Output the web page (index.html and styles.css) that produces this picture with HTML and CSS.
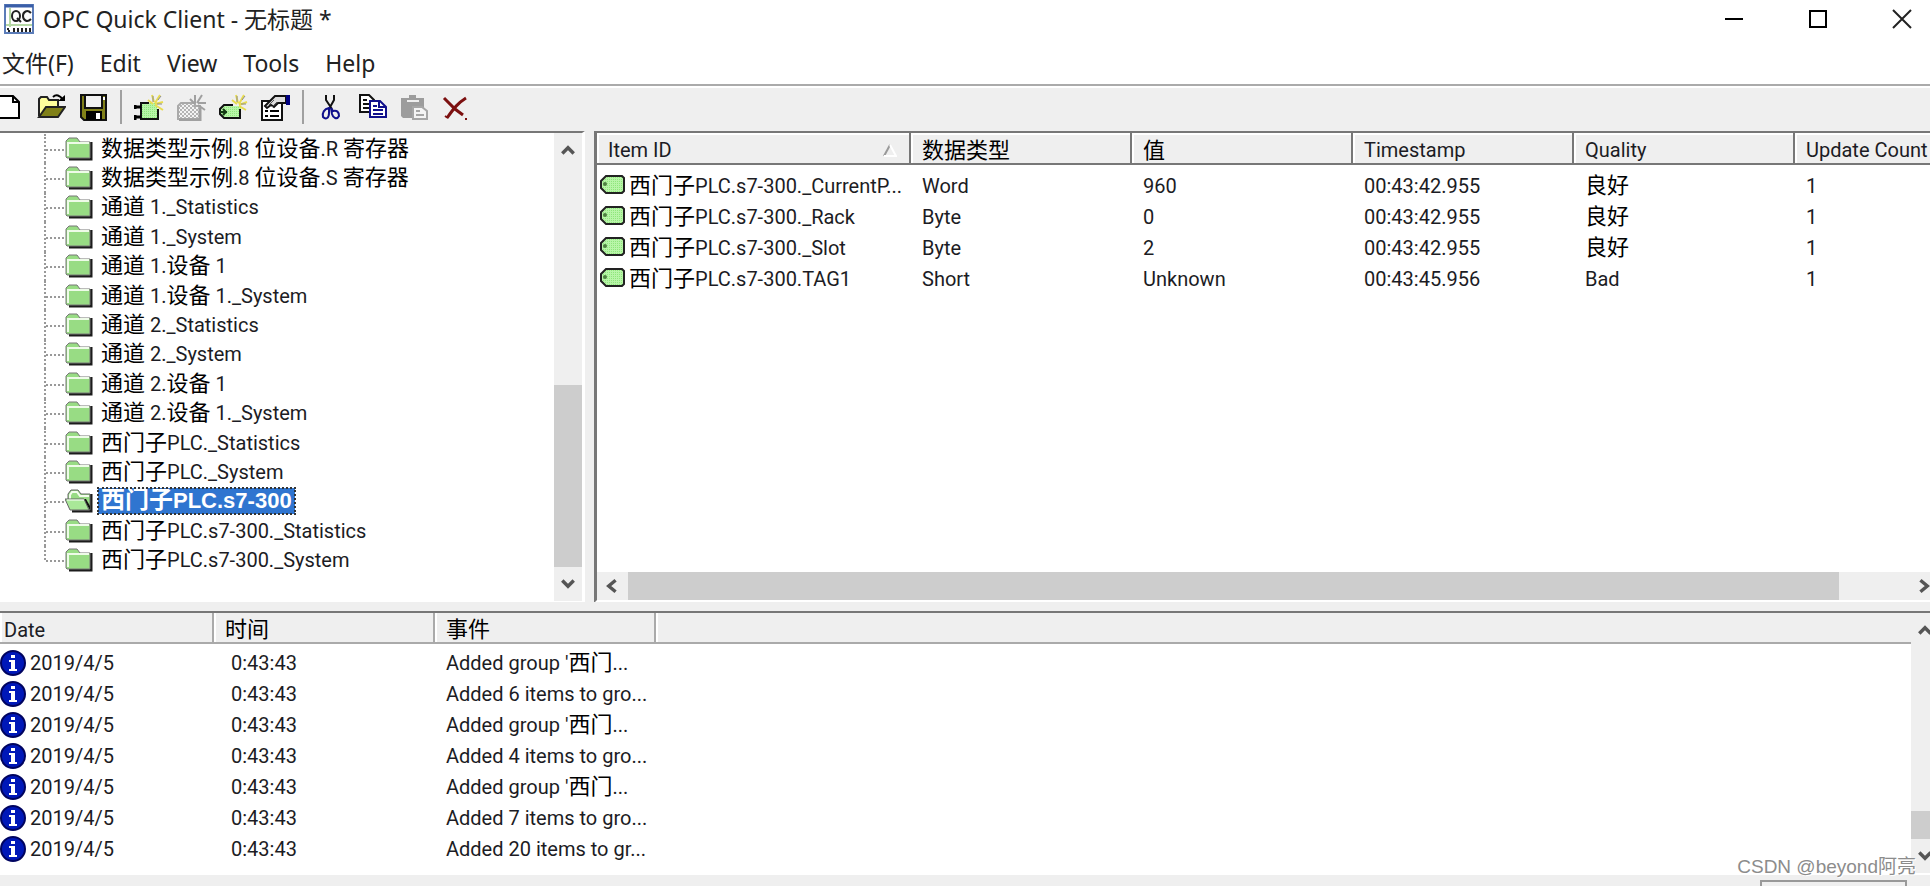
FILE: index.html
```html
<!DOCTYPE html>
<html lang="zh-CN">
<head>
<meta charset="utf-8">
<title>OPC Quick Client - 无标题 *</title>
<link rel="stylesheet" href="styles.css">
</head>
<body>
<svg class="defs" aria-hidden="true">
  <defs>
    <pattern id="mesh" width="2" height="2" patternUnits="userSpaceOnUse"><rect width="2" height="2" fill="#b8f5a8"/><rect width="1" height="1" fill="#8fe67c"/></pattern>
    <pattern id="graymesh" width="4" height="4" patternUnits="userSpaceOnUse"><rect width="4" height="4" fill="#f4f4f4"/><rect width="2" height="2" fill="#b4b4b4"/><rect x="2" y="2" width="2" height="2" fill="#b4b4b4"/></pattern>
  </defs>
  <symbol id="folder" viewBox="0 0 28 24">
    <path d="M4 22H26V5" fill="none" stroke="#1c1c1c" stroke-width="3"/>
    <path d="M1 20V4l3-3h8l3 4h10v16H2z" fill="#98dc84" stroke="#767676"/>
    <path d="M3 19V6h21" fill="none" stroke="#eefbe8" stroke-width="2"/>
  </symbol>
  <symbol id="folder-open" viewBox="0 0 28 24">
    <path d="M7 22H26V5" fill="none" stroke="#1c1c1c" stroke-width="3"/>
    <path d="M3 12V5l3-4h7l3 4h9v16H7z" fill="#98dc84" stroke="#666"/>
    <path d="M5 10V6l2-3h5l3 4h9" fill="none" stroke="#f2fcec" stroke-width="2"/>
    <path d="M18 10l7 11V17l-4-7z" fill="#111"/>
    <path d="M0 10h19l5 11H5z" fill="#a9e898" stroke="#666"/>
    <path d="M2 11h17" stroke="#fff"/>
  </symbol>
  <symbol id="tag" viewBox="0 0 27 20">
    <path d="M7 1h16l2 2v13l-2 2H7l-5-5V6z" fill="url(#mesh)" stroke="#222" stroke-width="2"/>
    <circle cx="6" cy="9" r="2" fill="#4d8040"/>
  </symbol>
  <symbol id="info" viewBox="0 0 26 26">
    <circle cx="13" cy="13" r="12" fill="#0018b8" stroke="#000460" stroke-width="2"/>
    <path d="M11 5h4v3h-4zM9 10h6v9h2v2H9v-2h2v-7H9z" fill="#fff"/>
  </symbol>
  <symbol id="up" viewBox="0 0 14 12"><path d="M2 9l5-5 5 5" fill="none" stroke="#555" stroke-width="3"/></symbol>
  <symbol id="down" viewBox="0 0 14 12"><path d="M2 3l5 5 5-5" fill="none" stroke="#555" stroke-width="3"/></symbol>
  <symbol id="left" viewBox="0 0 12 14"><path d="M10 2L4 7l6 5" fill="none" stroke="#555" stroke-width="3"/></symbol>
  <symbol id="right" viewBox="0 0 12 14"><path d="M2 2l6 5-6 5" fill="none" stroke="#555" stroke-width="3"/></symbol>
</svg>

<header class="titlebar">
  <svg class="logo" viewBox="0 0 30 30">
    <rect x="1" y="1" width="28" height="28" fill="#fff" stroke="#5b7cb8" stroke-width="2"/>
    <path d="M1 2h28" stroke="#3a5ea8" stroke-width="3"/>
    <path d="M6 4v19M2 21h26" stroke="#b5d8a4" stroke-width="2"/>
    <ellipse cx="12" cy="12" rx="4" ry="5" fill="none" stroke="#222" stroke-width="2"/>
    <path d="M13 14l4 4M27 9c-4-4-8-1-8 3s4 7 8 3" fill="none" stroke="#222" stroke-width="2"/>
    <path d="M4 24v2m1 0v2M10 24v4M14 24v4M18 24v4M22 24v4M26 24v4" stroke="#222" stroke-width="2"/>
  </svg>
  <h1 class="caption">OPC Quick Client - 无标题 *</h1>
  <div class="winbtns">
    <button type="button" aria-label="Minimize"><svg viewBox="0 0 20 20"><path d="M1 10h18" stroke="#000" stroke-width="2"/></svg></button>
    <button type="button" aria-label="Maximize"><svg viewBox="0 0 20 20"><path d="M2 2h16v16H2z" fill="none" stroke="#000" stroke-width="2"/></svg></button>
    <button type="button" aria-label="Close"><svg viewBox="0 0 20 20"><path d="M1 1l18 18M19 1L1 19" stroke="#222" stroke-width="2"/></svg></button>
  </div>
</header>

<nav class="menubar">
  <button type="button">文件(F)</button>
  <button type="button">Edit</button>
  <button type="button">View</button>
  <button type="button">Tools</button>
  <button type="button">Help</button>
</nav>

<div class="toolbar" role="toolbar">
  <button type="button" class="first" aria-label="New"><svg viewBox="0 0 30 28"><path d="M-3 3h16l6 6v16H-3z" fill="#fff" stroke="#000" stroke-width="2"/><path d="M13 3v6h6" fill="none" stroke="#000" stroke-width="2"/></svg></button>
  <button type="button" aria-label="Open"><svg viewBox="0 0 30 28"><path d="M3 23V6l2-2h6l2 3h9v6" fill="#ffff9c" stroke="#222" stroke-width="2"/><path d="M3 24l7-10h19l-7 10z" fill="#808018" stroke="#222" stroke-width="2"/><path d="M17 4c3-3 7-2 10 3" fill="none" stroke="#000" stroke-width="2"/><path d="M22 8h7V2z"/></svg></button>
  <button type="button" aria-label="Save"><svg viewBox="0 0 30 28"><path d="M3 2h25v25H6l-3-3z" fill="#808018" stroke="#111" stroke-width="2"/><path d="M7 2h17v13H7z" fill="#f2f2f2" stroke="#111" stroke-width="2"/><path d="M8 18h16v9H8z" fill="#000"/><path d="M18 20h4v6h-4z" fill="#fff"/><path d="M25 4h2v3h-2z" fill="#fff"/></svg></button>
  <span class="sep"></span>
  <button type="button" aria-label="New server"><svg viewBox="0 0 30 28"><path d="M7 10h16v16H7z" fill="url(#mesh)"/><path d="M7 10h8M7 9v18M6 26h18V16" fill="none" stroke="#111" stroke-width="2"/><path d="M1 12v4M1 14h6M1 22v5M1 24h6" stroke="#000" stroke-width="3"/><path d="M18 2l2 7M26 2l-5 8M29 9l-8 2M29 17l-8-5M14 7l5 4" stroke="#e8dc50" stroke-width="2"/><path d="M19 3v6M27 3l-3 4M23 11h5" stroke="#8c8c8c"/></svg></button>
  <button type="button" aria-label="New group" disabled><svg viewBox="0 0 30 28"><path d="M2 26V13l3-3h14v3h5v13z" fill="url(#graymesh)" stroke="#aaa" stroke-width="2"/><path d="M3 27h21V15" fill="none" stroke="#a0a0a0" stroke-width="3"/><path d="M19 2v8M26 2l-5 8M30 10h-8M29 17l-7-5M14 6l5 5" stroke="#a0a0a0" stroke-width="2"/></svg></button>
  <button type="button" aria-label="New item"><svg viewBox="0 0 30 28"><path d="M5 13h18v11H5l-3-3v-5z" fill="url(#mesh)"/><path d="M15 12H6l-4 4v5l4 4h16v-9" fill="none" stroke="#111" stroke-width="2"/><path d="M2 19h7M5 16l3 3-3 3" fill="none" stroke="#133a13" stroke-width="2"/><path d="M18 2l2 8M26 2l-5 9M29 9l-8 3M28 17l-7-4M14 7l5 4" stroke="#e8dc50" stroke-width="2"/><path d="M19 3v6M27 3l-3 4M23 11h5" stroke="#8c8c8c"/></svg></button>
  <button type="button" aria-label="Properties"><svg viewBox="0 0 30 28"><path d="M2 8h20v19H2z" fill="#fff" stroke="#111" stroke-width="2"/><path d="M5 13l7-7 3-3h11v7h-8l-4 4-3-2-4 3z" fill="#ddd" stroke="#111" stroke-width="2"/><path d="M9 12l5-5m-2 7l5-5" stroke="#555"/><path d="M26 2h4v10h-4z" fill="#000080"/><path d="M5 18h3m2 0h9M5 23h3m2 0h9" stroke="#000" stroke-width="2"/></svg></button>
  <span class="sep"></span>
  <button type="button" aria-label="Cut"><svg viewBox="0 0 30 28"><path d="M10 2v5l6 9M18 2v5l-5 9" fill="none" stroke="#111" stroke-width="2"/><path d="M13 15c-5 1-7 5-6 9 3 3 6 1 6-4zM15 15l2 3c4-1 6 1 6 5-2 4-6 2-7-2z" fill="none" stroke="#10108c" stroke-width="2"/></svg></button>
  <button type="button" aria-label="Copy"><svg viewBox="0 0 30 28"><path d="M2 2h9l5 5v12H2z" fill="#fff" stroke="#111" stroke-width="2"/><path d="M5 7h4m-4 4h6m-6 4h6" stroke="#111" stroke-width="2"/><path d="M12 8h10l6 6v10H12z" fill="#fff" stroke="#10108c" stroke-width="2"/><path d="M21 8v6h6M15 13h4m-4 4h10m-10 4h10" fill="none" stroke="#10108c" stroke-width="2"/></svg></button>
  <button type="button" aria-label="Paste" disabled><svg viewBox="0 0 30 28"><path d="M1 5h8V2h7v3h8v20H3l-2-2z" fill="#9c9c9c"/><path d="M7 8h12" stroke="#eee" stroke-width="2"/><path d="M13 14h9l5 4v8H13z" fill="#f4f4f4" stroke="#a6a6a6" stroke-width="2"/><path d="M16 18h4m-4 4h8" stroke="#a6a6a6" stroke-width="2"/></svg></button>
  <button type="button" aria-label="Delete"><svg viewBox="0 0 30 28"><path d="M2 5l11 11 8 6M24 5c-8 5-12 10-19 20" fill="none" stroke="#7c1010" stroke-width="3"/><path d="M3 23l3 2M23 26h2" stroke="#7c1010" stroke-width="2"/></svg></button>
</div>

<main class="upper">
  <section class="tree-pane" aria-label="Groups">
    <ul class="tree">
      <li><svg><use href="#folder"/></svg><span class="label"><i>数据类型示例</i>.8 <i>位设备</i>.R <i>寄存器</i></span></li>
      <li><svg><use href="#folder"/></svg><span class="label"><i>数据类型示例</i>.8 <i>位设备</i>.S <i>寄存器</i></span></li>
      <li><svg><use href="#folder"/></svg><span class="label"><i>通道</i> 1._Statistics</span></li>
      <li><svg><use href="#folder"/></svg><span class="label"><i>通道</i> 1._System</span></li>
      <li><svg><use href="#folder"/></svg><span class="label"><i>通道</i> 1.<i>设备</i> 1</span></li>
      <li><svg><use href="#folder"/></svg><span class="label"><i>通道</i> 1.<i>设备</i> 1._System</span></li>
      <li><svg><use href="#folder"/></svg><span class="label"><i>通道</i> 2._Statistics</span></li>
      <li><svg><use href="#folder"/></svg><span class="label"><i>通道</i> 2._System</span></li>
      <li><svg><use href="#folder"/></svg><span class="label"><i>通道</i> 2.<i>设备</i> 1</span></li>
      <li><svg><use href="#folder"/></svg><span class="label"><i>通道</i> 2.<i>设备</i> 1._System</span></li>
      <li><svg><use href="#folder"/></svg><span class="label"><i>西门子</i>PLC._Statistics</span></li>
      <li><svg><use href="#folder"/></svg><span class="label"><i>西门子</i>PLC._System</span></li>
      <li><svg><use href="#folder-open"/></svg><span class="label selected"><i>西门子</i>PLC.s7-300</span></li>
      <li><svg><use href="#folder"/></svg><span class="label"><i>西门子</i>PLC.s7-300._Statistics</span></li>
      <li><svg><use href="#folder"/></svg><span class="label"><i>西门子</i>PLC.s7-300._System</span></li>
    </ul>
    <div class="vscroll">
      <button type="button" aria-label="Scroll up"><svg class="v"><use href="#up"/></svg></button>
      <div class="track tree-track"><div class="thumb"></div></div>
      <button type="button" aria-label="Scroll down"><svg class="v"><use href="#down"/></svg></button>
    </div>
  </section>

  <section class="items-pane" aria-label="Items">
    <div class="items-view">
      <table class="grid items">
        <colgroup><col class="c-item"><col class="c-std"><col class="c-std"><col class="c-std"><col class="c-std"><col></colgroup>
        <thead><tr>
          <th><div class="sorted">Item ID<svg class="sort" viewBox="0 0 14 13"><path d="M1 12L7 1" stroke="#999" stroke-width="2"/><path d="M7 1l6 11H1" fill="none" stroke="#fff" stroke-width="2"/></svg></div></th>
          <th><i>数据类型</i></th><th><i>值</i></th><th>Timestamp</th><th>Quality</th><th>Update Count</th>
        </tr></thead>
        <tbody>
          <tr><td><svg class="tagico"><use href="#tag"/></svg><i>西门子</i>PLC.s7-300._CurrentP...</td><td>Word</td><td>960</td><td>00:43:42.955</td><td><i>良好</i></td><td>1</td></tr>
          <tr><td><svg class="tagico"><use href="#tag"/></svg><i>西门子</i>PLC.s7-300._Rack</td><td>Byte</td><td>0</td><td>00:43:42.955</td><td><i>良好</i></td><td>1</td></tr>
          <tr><td><svg class="tagico"><use href="#tag"/></svg><i>西门子</i>PLC.s7-300._Slot</td><td>Byte</td><td>2</td><td>00:43:42.955</td><td><i>良好</i></td><td>1</td></tr>
          <tr><td><svg class="tagico"><use href="#tag"/></svg><i>西门子</i>PLC.s7-300.TAG1</td><td>Short</td><td>Unknown</td><td>00:43:45.956</td><td>Bad</td><td>1</td></tr>
        </tbody>
      </table>
    </div>
    <div class="hscroll">
      <button type="button" aria-label="Scroll left"><svg class="h"><use href="#left"/></svg></button>
      <div class="track"><div class="thumb"></div></div>
      <button type="button" class="end" aria-label="Scroll right"><svg class="h"><use href="#right"/></svg></button>
    </div>
  </section>
</main>

<section class="log-pane" aria-label="Events">
  <div class="log-view">
    <table class="grid log">
      <colgroup><col class="c-date"><col class="c-std"><col class="c-std"><col></colgroup>
      <thead><tr><th>Date</th><th><i>时间</i></th><th><i>事件</i></th><th></th></tr></thead>
      <tbody>
        <tr><td><svg class="infoico"><use href="#info"/></svg>2019/4/5</td><td>0:43:43</td><td>Added group '<i>西门</i>...</td><td></td></tr>
        <tr><td><svg class="infoico"><use href="#info"/></svg>2019/4/5</td><td>0:43:43</td><td>Added 6 items to gro...</td><td></td></tr>
        <tr><td><svg class="infoico"><use href="#info"/></svg>2019/4/5</td><td>0:43:43</td><td>Added group '<i>西门</i>...</td><td></td></tr>
        <tr><td><svg class="infoico"><use href="#info"/></svg>2019/4/5</td><td>0:43:43</td><td>Added 4 items to gro...</td><td></td></tr>
        <tr><td><svg class="infoico"><use href="#info"/></svg>2019/4/5</td><td>0:43:43</td><td>Added group '<i>西门</i>...</td><td></td></tr>
        <tr><td><svg class="infoico"><use href="#info"/></svg>2019/4/5</td><td>0:43:43</td><td>Added 7 items to gro...</td><td></td></tr>
        <tr><td><svg class="infoico"><use href="#info"/></svg>2019/4/5</td><td>0:43:43</td><td>Added 20 items to gr...</td><td></td></tr>
      </tbody>
    </table>
  </div>
  <div class="vscroll log-scroll">
    <button type="button" aria-label="Scroll up"><svg class="v"><use href="#up"/></svg></button>
    <div class="track log-track"><div class="thumb"></div></div>
    <button type="button" aria-label="Scroll down"><svg class="v"><use href="#down"/></svg></button>
  </div>
</section>

<footer class="statusbar"><span class="count"></span></footer>
<div class="watermark">CSDN @beyond阿亮</div>
</body>
</html>
```
FILE: styles.css
```css
* { box-sizing: border-box; }

body {
  margin: 0;
  height: 100vh;
  display: flex;
  flex-direction: column;
  overflow: hidden;
  background: #fff;
  color: #1c1c24;
  font: 20px/24px Roboto, "Noto Sans CJK SC", sans-serif;
}

button {
  margin: 0;
  padding: 0;
  border: 0;
  background: none;
  color: inherit;
  font: inherit;
}

svg { display: block; flex: none; }
.defs { position: absolute; width: 0; height: 0; }

/* Chinese runs are set one step larger than the Latin text */
i {
  font-style: normal;
  font-size: 22px;
  line-height: 20px;
  font-family: "Noto Sans CJK SC", sans-serif;
  color: #000;
}

/* title bar and menus */
.titlebar { flex: none; display: flex; align-items: center; height: 38px; padding-left: 4px; }
.logo { width: 30px; height: 30px; }
.caption {
  flex: 1;
  margin: 0 0 0 9px;
  font: 23px/30px "Noto Sans", "Noto Sans CJK SC", sans-serif;
  color: #222;
}
.winbtns { display: flex; gap: 42px; margin-right: 18px; }
.winbtns button { width: 42px; display: flex; justify-content: flex-end; }
.winbtns svg { width: 20px; height: 20px; }

.menubar {
  flex: none;
  display: flex;
  gap: 26px;
  height: 46px;
  padding: 4px 0 0 2px;
  align-items: center;
  font: 23px/30px "Noto Sans", "Noto Sans CJK SC", sans-serif;
  color: #222;
}

/* toolbar */
.toolbar {
  flex: none;
  display: flex;
  align-items: center;
  height: 47px;
  padding-bottom: 4px;
  background: #efefef;
  border-top: 2px solid #aaa;
  box-shadow: inset 0 2px #fff;
}
.toolbar button { width: 42px; display: flex; justify-content: center; }
.toolbar button.first { width: 30px; }
.toolbar svg { width: 30px; height: 28px; }
.sep { width: 2px; height: 34px; margin: 0 6px; background: #a0a0a0; }

/* upper panes */
.upper { flex: 1; min-height: 0; display: flex; gap: 9px; margin-bottom: 8px; background: #efefef; }
.tree-pane {
  width: 585px;
  display: flex;
  border-top: 2px solid #777;
  border-right: 3px solid #fff;
  border-bottom: 2px solid #fff;
  background: #fff;
}
.tree {
  flex: 1;
  display: grid;
  grid-auto-rows: 1fr;
  margin: 0;
  padding: 1px 0 26px 44px;
  list-style: none;
}
.tree li {
  position: relative;
  min-height: 0;
  display: flex;
  align-items: center;
  padding-left: 21px;
  white-space: nowrap;
}
.tree li::before {
  content: "";
  position: absolute;
  inset: 0 auto 0 0;
  border-left: 2px dotted #999;
}
.tree li:last-child::before { bottom: 50%; }
.tree li::after {
  content: "";
  position: absolute;
  left: 2px;
  top: 50%;
  width: 18px;
  border-top: 2px dotted #999;
}
.tree svg { width: 28px; height: 24px; }
.label { margin-left: 5px; padding: 0 3px; line-height: 26px; }
.selected {
  background: #2f75d0;
  color: #fff;
  font: 700 22px/26px "Liberation Sans", "Noto Sans CJK SC", sans-serif;
  outline: 2px dotted #333;
  outline-offset: -1px;
}
.selected i { color: #fff; font-size: 24px; }

/* scroll bars */
.vscroll { width: 28px; display: flex; flex-direction: column; background: #efefef; }
.vscroll button { height: 34px; display: flex; align-items: center; justify-content: center; }
.hscroll { flex: none; height: 28px; display: flex; background: #efefef; }
.hscroll button { width: 31px; padding-right: 4px; display: flex; align-items: center; justify-content: center; }
.hscroll .end { width: 12px; padding: 0; justify-content: flex-start; }
.track { flex: 1; display: flex; }
.thumb { flex: 1; background: #cdcdcd; }
.vscroll .track { flex-direction: column; }
.tree-track { padding-top: 218px; }
.hscroll .track { padding-right: 79px; }
.v { width: 16px; height: 14px; }
.h { width: 14px; height: 16px; }

/* list views */
.items-pane {
  flex: 1;
  min-width: 0;
  display: flex;
  flex-direction: column;
  border-top: 2px solid #777;
  border-left: 3px solid #777;
  border-bottom: 3px solid #fff;
  background: #fff;
}
.items-view, .log-view { flex: 1; min-width: 0; min-height: 0; }
.grid { width: 100%; table-layout: fixed; border-collapse: separate; border-spacing: 0; }
.grid th, .grid td { padding: 0 0 0 11px; text-align: left; white-space: nowrap; font-weight: 400; }
.grid th { height: 32px; padding-top: 4px; background: #efefef; }
.grid td { height: 31px; }
.c-item { width: 314px; }
.c-std { width: 221px; }
.c-date { width: 214px; }
.items th { border-right: 2px solid #777; border-bottom: 2px solid #777; box-shadow: inset 2px 2px #fff; }
.items th:last-child { border-right: 0; }
.items tbody::before { content: ""; display: block; height: 5px; }
.items td:first-child { padding-left: 2px; }
.sorted { display: flex; align-items: center; justify-content: space-between; padding-right: 12px; }
.sort { width: 14px; height: 13px; }
.tagico { display: inline-block; width: 27px; height: 20px; margin-right: 3px; vertical-align: -2px; }

/* event log */
.log-pane {
  flex: none;
  height: 264px;
  display: flex;
  border-top: 2px solid #777;
  border-bottom: 2px solid #fff;
  background: #fff;
  box-shadow: 0 -9px #efefef;
}
.log th { height: 31px; border-right: 2px solid #aaa; border-bottom: 2px solid #aaa; box-shadow: inset 2px 0 #fff; }
.log th:first-child { padding-left: 4px; }
.log th:last-child { border-right: 0; }
.log tbody::before { content: ""; display: block; height: 3px; }
.log td:first-child { padding-left: 0; }
.log td:nth-child(2) { padding-left: 17px; }
.infoico { display: inline-block; width: 26px; height: 26px; margin-right: 4px; vertical-align: -6px; }
.log-scroll { width: 28px; margin-right: -9px; }
.log-track { padding: 164px 0 0; }

/* status bar */
.statusbar { flex: none; height: 11px; display: flex; justify-content: flex-end; padding: 5px 23px 0 0; background: #efefef; }
.count { width: 147px; border: solid #999; border-width: 2px 2px 0; }

.watermark {
  position: absolute;
  right: 14px;
  bottom: 7px;
  color: #8c8c8c;
  font: 19px/24px "Liberation Sans", "Noto Sans CJK SC", sans-serif;
  text-shadow: 1px 1px #fff;
}
```
